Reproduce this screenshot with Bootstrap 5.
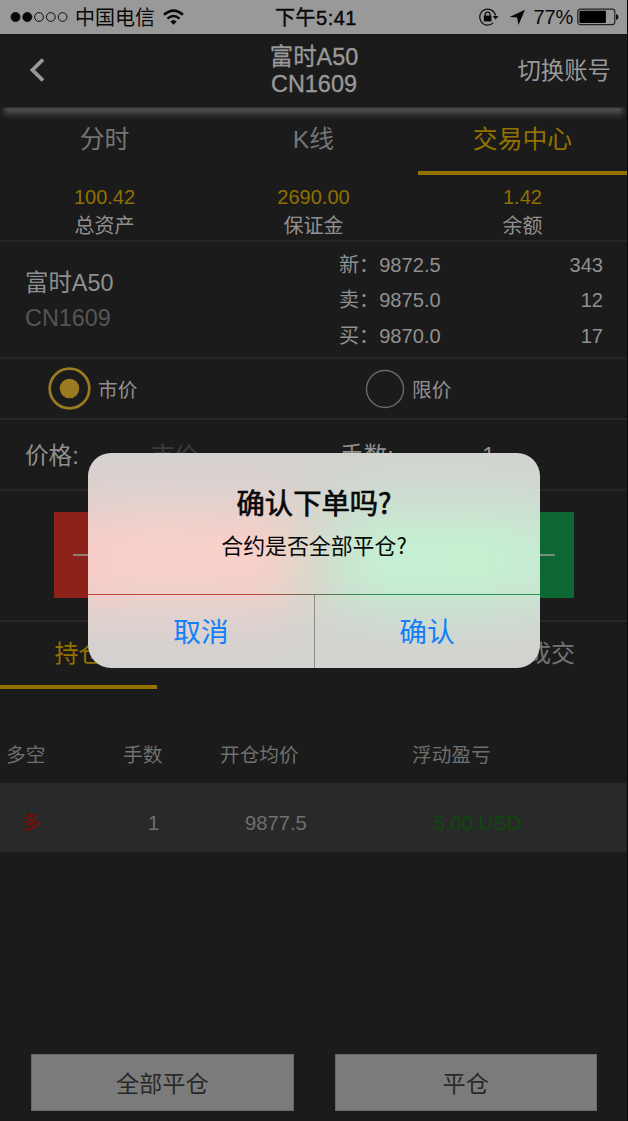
<!DOCTYPE html>
<html lang="zh-CN">
<head>
<meta charset="utf-8">
<meta name="viewport" content="width=device-width, initial-scale=1">
<title>交易中心</title>
<link href="https://cdn.jsdelivr.net/npm/bootstrap@5.3.0/dist/css/bootstrap.min.css" rel="stylesheet">
<style>
body{font-family:"Liberation Sans","Noto Sans CJK SC",sans-serif;background:#1b1b1b;color:#909090;font-size:20px;line-height:28px;overflow:hidden}
.phone{width:628px;height:1121px;border-right:1px solid #050505}
.status{height:34px;background:#999;color:#080808;display:grid;grid-template-columns:1fr auto 1fr;padding:0 8px 0 10px}
.carrier{margin:1px 0 0 7px}
.lock{margin-right:10px}
.level{margin:0 4px 0 8px;letter-spacing:-.2px}
.clock{-webkit-text-stroke:.45px;letter-spacing:.5px;padding:1px 0 0 3px}
.topbar{height:73px;display:grid;grid-template-columns:1fr auto 1fr;padding:0 16px 0 17px;font-size:23.4px;color:#999}
.back{margin-left:12px}
.title{line-height:27px;-webkit-text-stroke:.35px;padding-top:1px}
.glow{height:13px;background:linear-gradient(#232323,#4e4e4e 14%,#454545 35%,#2a2a2a 68%,#1b1b1b);-webkit-mask-image:linear-gradient(90deg,transparent,#000 8px,#000 619px,transparent)}
.tabs{height:55px;font-size:24.8px;color:#747474}
.tabs>div{width:33.333%;padding-top:6px;border-bottom:4px solid transparent}
.tabs .on,.sub .on{color:#947200;border-color:#947200}
.stats{height:67px;padding-top:8px}
.stats>div{width:33.333%}
.stats b{display:block;font-weight:400;color:#907000;height:29px}
.rule{border-bottom:2px solid #262626}
.quote{height:117px;padding:6px 24px 0 25px}
.quote .name{width:314px;padding-top:18px;font-size:23.4px;line-height:35px}
.dim{color:#555}
.depth{line-height:35.4px;font-size:20.1px}
.choice{height:61px}
.choice .opt{gap:7px;font-size:19.7px}
.opt span{padding-top:2px}
.opt.market{width:317px}
.entry{height:71px;font-size:23.6px;padding:2px 0 0 25px}
.orders{height:131px;padding:21px 53px 0 54px}
.orders>div{height:86px;width:257px;padding:0 19px}
.orders i{display:block;height:2px;background:#999;opacity:.75}
.buy{background:#8c211a}.sell{background:#0d6733}
.sub{height:67px;font-size:24px;color:#747474}
.sub>div{width:157px;padding-top:18px;border-bottom:4px solid transparent}
.sub .last{padding-left:5px}
.cols{display:grid;grid-template-columns:117px 97px 192px 1fr;padding-left:6px;color:#6f6f6f;font-size:19.7px;line-height:28px}
.heads{height:94px;padding-top:52px}
.held{height:69px;background:#292929;padding-top:26px;padding-left:22px;grid-template-columns:126px 97px 182px 1fr;font-size:20.2px}
.long{font-size:18.5px;color:#850804}
.foot{margin-top:202px;padding:0 30px 0 31px;gap:41px}
.foot button{height:57px;border:1px solid #686868;background:#7b7b7b;color:#292929;border-radius:0;font-size:23.2px;padding:2px 0 0;flex:1}
.alertbox{position:absolute;left:88px;top:453px;width:452px;height:215px;border-radius:23px;overflow:hidden;color:#080808;
background:linear-gradient(rgba(211,210,208,.92),rgba(211,210,208,.82) 12%,rgba(211,210,208,.5) 24%,rgba(211,210,208,.15) 36%,rgba(211,210,208,0) 45%,rgba(211,210,208,0) 56%,rgba(211,210,208,.3) 67%,rgba(211,210,208,.65) 77%,rgba(211,210,208,.9) 88%,rgba(211,210,208,.98)),linear-gradient(90deg,#f7cdc9,#f9d1cb 15%,#f8cfc9 36%,#ecd3ca 43%,#d8d9cb 50%,#cbe5d0 57%,#c5efd2 66%,#c5efd1 88%,#c8ead2)}
.alertbox .msg{height:141px;padding-top:31px}
.alertbox h1{font-size:28.3px;line-height:40px;margin:0;-webkit-text-stroke:.7px;font-weight:400}
.alertbox p{font-size:21.9px;line-height:30px;margin:8px 0 0}
.msg span{font-family:"Noto Sans CJK SC",sans-serif;line-height:1}
.line{height:1px;background:linear-gradient(90deg,#c9493f,#c9493f 35%,#716f51 50%,#299253 65%,#299253)}
.acts{height:73px}
.acts a{width:226px;text-align:center;font-size:27.7px;line-height:76px;color:#1280fb;text-decoration:none}
.acts a+a{border-left:1px solid #8d8d80;padding-right:1px}
</style>
</head>
<body>
<div class="phone position-relative">
  <div class="status align-items-center">
    <div class="d-flex align-items-center">
      <svg width="58" height="12" viewBox="0 0 58 12" fill="none" stroke="#111" stroke-width="1"><g fill="#080808"><circle cx="5.5" cy="6" r="4.5"/><circle cx="17.3" cy="6" r="4.5"/></g><circle cx="29" cy="6" r="4.4"/><circle cx="40.8" cy="6" r="4.4"/><circle cx="52.6" cy="6" r="4.4"/></svg>
      <span class="carrier">中国电信</span>
      <svg class="ms-2" width="21" height="17" viewBox="0 0 21 17" fill="none" stroke="#080808" stroke-width="2.5"><path d="M1 5.800Q10.500-2.600 20 5.800"/><path d="M4.500 9.600Q10.500 4.400 16.500 9.600"/><path d="M7.300 12.400Q10.500 9.400 13.700 12.400L10.500 15.800Z" fill="#080808" stroke="none"/></svg>
    </div>
    <div class="clock">下午5:41</div>
    <div class="d-flex align-items-center justify-content-end">
      <svg class="lock" width="21" height="20" viewBox="0 0 21 20" fill="none" stroke="#111" stroke-width="1.300"><path d="M17.500 8.500A8 8 0 1 0 15.200 15.900"/><path d="M14.800 9H20.500L17.600 12.500Z" fill="#080808" stroke="none"/><path d="M7.200 9V7.500a2.400 2.400 0 0 1 4.800 0V9" stroke-width="1.300"/><rect x="5.800" y="8.600" width="7.600" height="5.800" fill="#080808" stroke="none"/></svg>
      <svg width="17" height="17" viewBox="0 0 17 17"><path d="M16 .8L9.500 16L8.100 8.600L.5 8Z" fill="#080808"/></svg>
      <span class="level">77%</span>
      <svg width="42" height="18" viewBox="0 0 42 18"><rect x=".8" y="1.200" width="37" height="15.400" rx="2.500" fill="none" stroke="#222" stroke-width="1.200"/><rect x="2.400" y="2.700" width="26.500" height="12.400" rx="1" fill="#000"/><path d="M39 6q2.500.5 2.500 3T39 12Z" fill="#111"/></svg>
    </div>
  </div>
  <div class="topbar align-items-center">
    <svg class="back" width="17" height="26" viewBox="0 0 17 26" fill="none" stroke="#999" stroke-width="3.800"><path d="M14 1.500L3.500 12L14 22.500"/></svg>
    <div class="title text-center">富时A50<br>CN1609</div>
    <div class="text-end">切换账号</div>
  </div>
  <div class="glow"></div>
  <div class="tabs d-flex text-center"><div>分时</div><div>K线</div><div class="on">交易中心</div></div>
  <div class="stats rule d-flex text-center">
    <div><b>100.42</b>总资产</div><div><b>2690.00</b>保证金</div><div><b>1.42</b>余额</div>
  </div>
  <div class="quote rule d-flex">
    <div class="name">富时A50<br><span class="dim">CN1609</span></div>
    <div class="depth flex-grow-1">
      <div class="d-flex justify-content-between"><span>新：9872.5</span><span>343</span></div>
      <div class="d-flex justify-content-between"><span>卖：9875.0</span><span>12</span></div>
      <div class="d-flex justify-content-between"><span>买：9870.0</span><span>17</span></div>
    </div>
  </div>
  <div class="choice rule d-flex align-items-center">
    <div class="opt market ps-5 d-flex align-items-center"><svg width="43" height="43" viewBox="0 0 43 43"><circle cx="21.500" cy="21.500" r="19.800" fill="none" stroke="#9a7b1f" stroke-width="2.700"/><circle cx="21.500" cy="21.500" r="9.800" fill="#9a7b1f"/></svg><span>市价</span></div>
    <div class="opt ps-5 d-flex align-items-center"><svg width="40" height="40" viewBox="0 0 40 40"><circle cx="20" cy="20" r="18.500" fill="none" stroke="#6b6b6b" stroke-width="1.400"/></svg><span>限价</span></div>
  </div>
  <div class="entry rule d-flex align-items-center"><span style="width:126px">价格:</span><span style="width:189px;color:#3b3b3b">市价</span><span style="width:142px">手数:</span><span>1</span></div>
  <div class="orders rule d-flex justify-content-between"><div class="buy d-flex align-items-center"><i class="w-100"></i></div><div class="sell d-flex align-items-center"><i class="w-100"></i></div></div>
  <div class="sub d-flex justify-content-between text-center"><div class="on">持仓</div><div class="last">成交</div></div>
  <div class="cols heads"><span>多空</span><span>手数</span><span>开仓均价</span><span>浮动盈亏</span></div>
  <div class="cols held"><span class="long">多</span><span>1</span><span>9877.5</span><span style="color:#0c490c">-5.00:USD</span></div>
  <div class="foot d-flex"><button>全部平仓</button><button>平仓</button></div>

  <div class="alertbox" role="dialog">
    <div class="msg text-center"><h1>确认下单吗<span>?</span></h1><p>合约是否全部平仓<span>?</span></p></div>
    <div class="line"></div>
    <div class="acts d-flex"><a href="#">取消</a><a href="#">确认</a></div>
  </div>
</div>
<script src="https://cdn.jsdelivr.net/npm/bootstrap@5.3.0/dist/js/bootstrap.bundle.min.js"></script>
</body>
</html>
